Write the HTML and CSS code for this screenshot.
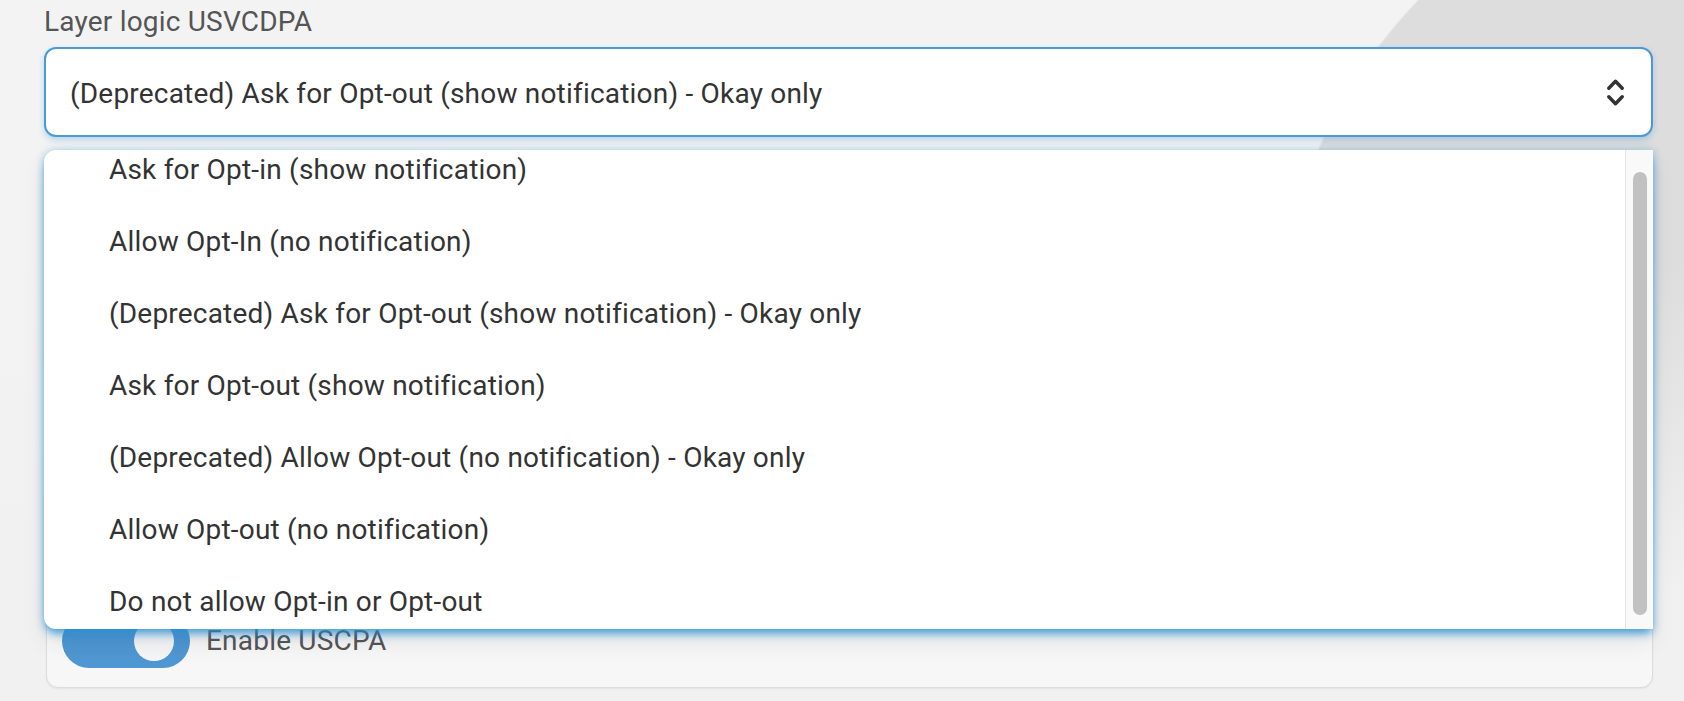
FILE: index.html
```html
<!DOCTYPE html>
<html lang="en">
<head>
<meta charset="utf-8">
<title>Layer logic USVCDPA</title>
<link rel="stylesheet" href="styles.css">
</head>
<body>
<main class="page">
  <label class="field-label">Layer logic USVCDPA</label>
  <div class="select-wrap">
    <div class="select">
      <span class="select-value">(Deprecated) Ask for Opt-out (show notification) - Okay only</span>
      <svg class="select-icon" width="17" height="27" viewBox="0 0 17 27" aria-hidden="true">
        <polyline points="1.8,9.2 8.5,2.2 15.2,9.2" />
        <polyline points="1.8,17.8 8.5,24.8 15.2,17.8" />
      </svg>
    </div>
    <div class="dropdown">
      <div class="options">
        <ul class="options-inner">
          <li class="option">Ask for Opt-in (show notification)</li>
          <li class="option">Allow Opt-In (no notification)</li>
          <li class="option">(Deprecated) Ask for Opt-out (show notification) - Okay only</li>
          <li class="option">Ask for Opt-out (show notification)</li>
          <li class="option">(Deprecated) Allow Opt-out (no notification) - Okay only</li>
          <li class="option">Allow Opt-out (no notification)</li>
          <li class="option">Do not allow Opt-in or Opt-out</li>
        </ul>
      </div>
      <div class="scrollbar"><div class="scroll-thumb"></div></div>
    </div>
  </div>
  <section class="card">
    <div class="toggle-row">
      <span class="toggle"><span class="knob"></span></span>
      <span class="toggle-label">Enable USCPA</span>
    </div>
  </section>
</main>
</body>
</html>
```

FILE: styles.css
```css
* { box-sizing: border-box; }

html, body {
  margin: 0;
  padding: 0;
  height: 100%;
}

body {
  overflow: hidden;
  font-family: Roboto, "Liberation Sans", sans-serif;
  font-size: 28px;
  line-height: 34px;
  letter-spacing: 0.2px;
  color: #333;
  background:
    linear-gradient(to bottom, rgba(242,242,242,0) 260px, #f1f1f1 600px),
    radial-gradient(circle 510px at 1785px 353px, #dddddd 99.6%, rgba(221,221,221,0) 100%),
    #f3f3f3;
}

.page {
  width: 1653px;
  padding: 5px 0 0 44px;
}

.field-label {
  display: block;
  color: #555;
}

.select-wrap {
  position: relative;
  margin-top: 8px;
}

.select {
  display: flex;
  align-items: center;
  height: 90px;
  padding: 0 27px 0 24px;
  background: #fff;
  border: 2px solid #4a9ad6;
  border-radius: 12px;
  box-shadow: 0 3px 6px rgba(74,155,214,0.35);
}

.select-value {
  flex: 1;
  padding-top: 4px;
  color: #333;
}

.select-icon {
  display: block;
  fill: none;
  stroke: #333;
  stroke-width: 3.4;
  stroke-linecap: round;
  stroke-linejoin: round;
}

.dropdown {
  position: absolute;
  top: 103px;
  left: 0;
  right: 0;
  height: 479px;
  display: flex;
  background: #fff;
  border-radius: 12px 0 0 12px;
  z-index: 5;
  box-shadow:
    0 6px 10px -2px rgba(41,145,215,0.85),
    0 0 9px rgba(41,145,215,0.35),
    0 14px 24px rgba(0,0,0,0.08);
}

.options {
  flex: 1;
  overflow: hidden;
  border-radius: 12px 0 0 12px;
}

.options-inner {
  list-style: none;
  margin: -16px 0 0;
  padding: 0;
}

.option {
  height: 72px;
  line-height: 72px;
  padding-left: 65px;
  color: #333;
  white-space: nowrap;
}

.scrollbar {
  width: 28px;
  background: #f9f9f9;
  border-left: 1px solid #e4e4e4;
  padding: 22px 0 0 7px;
}

.scroll-thumb {
  width: 14px;
  height: 443px;
  background: #c1c1c1;
  border-radius: 7px;
}

.card {
  margin: 461px 0 0 2px;
  padding: 15px 15px 19px;
  background: #f7f7f7;
  border: 1px solid #dcdcdc;
  border-radius: 12px;
  box-shadow: 0 1px 2px rgba(0,0,0,0.06);
}

.toggle-row {
  display: flex;
  align-items: center;
  gap: 16px;
}

.toggle {
  display: flex;
  align-items: center;
  width: 128px;
  height: 54px;
  padding-left: 72px;
  border-radius: 27px;
  background: #4f97d3;
}

.knob {
  width: 40px;
  height: 40px;
  border-radius: 50%;
  background: #f3f5f7;
}

.toggle-label {
  color: #555;
}
```
